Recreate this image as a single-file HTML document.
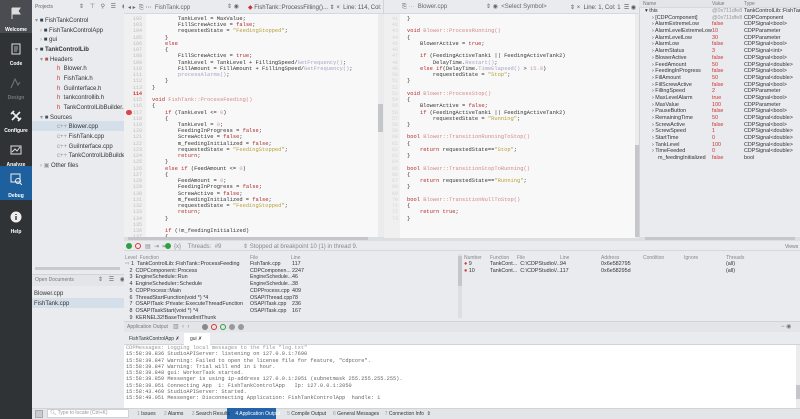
<!DOCTYPE html>
<html><head><meta charset="utf-8"><style>
*{margin:0;padding:0;box-sizing:border-box}
body{width:800px;height:419px;overflow:hidden;background:#e9ebee;font-family:"Liberation Sans",sans-serif;font-size:6px;color:#333;position:relative}
.a{position:absolute;white-space:nowrap}
.sb{left:0;top:0;width:32px;height:419px;background:#2f3336}
.sbi{position:absolute;left:0;width:32px;height:33px;text-align:center;color:#fff;font-weight:bold;font-size:5px}
.sbi .ic{position:absolute;left:10px;top:7px;width:12px;height:12px}
.sbi .lb{position:absolute;left:0;width:32px;top:25px}
.code{font-family:"Liberation Mono",monospace;font-size:5.4px;line-height:6.23px;white-space:pre;color:#333}
.k{color:#b02a2a}.s{color:#b5a13a}.f{color:#d58a8a}.n{color:#c9a0a0}.m{color:#a8a2c4}
.ln{font-family:"Liberation Mono",monospace;font-size:5px;line-height:6.23px;white-space:pre;color:#bdbdbd;text-align:right}
.red{color:#c33}
.gr{color:#999}
</style></head><body>

<div class="a sb">
 <div class="sbi" style="top:0;background:#494d51"><svg class="ic" viewBox="0 0 12 12"><path d="M2 1v11M2 1h8l-2 3 2 3H2" fill="#ddd" stroke="#ddd"/></svg><div class="lb" style="top:27px">Welcome</div></div>
 <div class="sbi" style="top:36px"><svg class="ic" viewBox="0 0 12 12"><rect x="2" y="1" width="8" height="10" fill="none" stroke="#ddd"/><path d="M4 4h4M4 6h4M4 8h3" stroke="#ddd" stroke-width=".8"/></svg><div class="lb">Code</div></div>
 <div class="sbi" style="top:70px;color:#777"><svg class="ic" viewBox="0 0 12 12"><path d="M1 11l4-9 3 6 2-3" fill="none" stroke="#777"/></svg><div class="lb">Design</div></div>
 <div class="sbi" style="top:103px"><svg class="ic" viewBox="0 0 12 12"><path d="M2 2l8 8M10 2l-8 8M1 4l3-3M8 11l3-3" stroke="#eee" stroke-width="1.6"/></svg><div class="lb">Configure</div></div>
 <div class="sbi" style="top:137px"><svg class="ic" viewBox="0 0 12 12"><rect x="1" y="2" width="10" height="8" fill="none" stroke="#ddd"/><path d="M2 8l3-3 2 2 3-4" fill="none" stroke="#ddd"/></svg><div class="lb">Analyze</div></div>
 <div class="sbi" style="top:166px;height:34px;background:#1e5f9e"><svg class="ic" viewBox="0 0 12 12"><rect x="1" y="1" width="9" height="8" fill="none" stroke="#eee"/><circle cx="8" cy="8" r="2.5" fill="none" stroke="#eee"/><path d="M10 10l2 2" stroke="#eee"/></svg><div class="lb" style="top:27px">Debug</div></div>
 <div class="sbi" style="top:204px"><svg class="ic" viewBox="0 0 12 12"><circle cx="6" cy="6" r="5.5" fill="#eee"/><path d="M6 5v4M6 3v1" stroke="#2f3336" stroke-width="1.4"/></svg><div class="lb">Help</div></div>
</div>

<div class="a" style="left:32px;top:0;width:92px;height:408px;background:#e9ebee"></div>
<div class="a" style="left:35px;top:4px;color:#666;font-size:5px">Projects</div>
<div class="a" style="left:79px;top:3px;color:#666;font-size:6px;letter-spacing:2px">⇕ ⊤ ⚲ ☰ ◉</div>
<div class="a" style="left:32px;top:121px;width:92px;height:10px;background:#d5dfea"></div>
<div class="a" style="left:35px;top:17px;line-height:9.65px">
<div><span class="gr">▾</span> <span style="color:#345">■</span> FishTankControl</div>
<div>&nbsp;&nbsp;&nbsp;<span class="gr">›</span> <span style="color:#345">■</span> FishTankControlApp</div>
<div>&nbsp;&nbsp;&nbsp;<span class="gr">›</span> <span style="color:#345">■</span> gui</div>
<div><span class="gr">▾</span> <span style="color:#345">■</span> <b>TankControlLib</b></div>
<div>&nbsp;&nbsp;&nbsp;<span class="gr">▾</span> <span style="color:#a55">■</span> Headers</div>
<div style="padding-left:22px"><span class="red">h</span>&nbsp; Blower.h</div>
<div style="padding-left:22px"><span class="red">h</span>&nbsp; FishTank.h</div>
<div style="padding-left:22px"><span class="red">h</span>&nbsp; GuiInterface.h</div>
<div style="padding-left:22px"><span class="red">h</span>&nbsp; tankcontrollib.h</div>
<div style="padding-left:22px"><span class="red">h</span>&nbsp; TankControlLibBuilder.h</div>
<div>&nbsp;&nbsp;&nbsp;<span class="gr">▾</span> <span style="color:#456">■</span> Sources</div>
<div style="padding-left:22px"><span class="gr">c++</span> Blower.cpp</div>
<div style="padding-left:22px"><span class="gr">c++</span> FishTank.cpp</div>
<div style="padding-left:22px"><span class="gr">c++</span> GuiInterface.cpp</div>
<div style="padding-left:22px"><span class="gr">c++</span> TankControlLibBuilder.cpp</div>
<div>&nbsp;&nbsp;&nbsp;<span class="gr">›</span> <span class="gr">▣</span> Other files</div>
</div>
<div class="a" style="left:35px;top:267px;width:85px;height:3px;background:#c6c9cd"></div>
<div class="a" style="left:32px;top:274px;width:92px;height:12px;background:#e3e5e9;border-top:1px solid #d0d3d7"></div>
<div class="a" style="left:35px;top:277px;color:#777;font-size:5px">Open Documents</div>
<div class="a" style="left:98px;top:276px;color:#666;letter-spacing:2px">⇕ ☰ ◉</div>
<div class="a" style="left:32px;top:298px;width:92px;height:10px;background:#d5dfea"></div>
<div class="a" style="left:34px;top:289px;line-height:10px">Blower.cpp<br>FishTank.cpp</div>

<div class="a" style="left:124px;top:0;width:259px;height:14px;background:#e9ebee;border-bottom:1px solid #d5d8dc"></div>
<div class="a" style="left:128px;top:4px;color:#666">◂ ▸ &nbsp;⎘ ⋯ &nbsp;FishTank.cpp</div>
<div class="a" style="left:227px;top:3px;color:#666">⇕ ◉</div>
<div class="a" style="left:248px;top:4px;color:#555"><span class="red">◆</span> FishTank::ProcessFilling()... ⇕ × &nbsp;Line: 114, Col: 1 &nbsp;☰ ◉</div>
<div class="a" style="left:124px;top:14px;width:259px;height:224px;background:#f8f8f8"></div>
<div class="a" style="left:124px;top:14px;width:22px;height:224px;background:#f0f0f0"></div>
<div class="a ln" style="left:124px;top:16px;width:18px">102
103
104
105
106
107
108
109
110
111
112
113
<span style="color:#c33;font-weight:bold">114</span>
115
116
117
118
119
120
121
122
123
124
125
126
127
128
129
130
131
132
133
134
135
136
137</div>
<div class="a" style="left:126px;top:110px;width:6px;height:5px;border-radius:3px;background:#d44"></div>
<div class="a code" style="left:152px;top:16px">        TankLevel = MaxValue;
        FillScrewActive = <span class="k">false</span>;
        requestedState = <span class="s">"FeedingStopped"</span>;
    }
    <span class="k">else</span>
    {
        FillScrewActive = <span class="k">true</span>;
        TankLevel = TankLevel + FillingSpeed/<span class="m">GetFrequency()</span>;
        FillAmount = FillAmount + FillingSpeed/<span class="m">GetFrequency()</span>;
        <span class="m">processAlarms()</span>;
    }
}

<span class="k">void</span> <span class="f">FishTank::ProcessFeeding()</span>
{
    <span class="k">if</span> (TankLevel &lt;= <span class="n">0</span>)
    {
        TankLevel = <span class="n">0</span>;
        FeedingInProgress = <span class="k">false</span>;
        ScrewActive = <span class="k">false</span>;
        m_feedingInitialized = <span class="k">false</span>;
        requestedState = <span class="s">"FeedingStopped"</span>;
        <span class="k">return</span>;
    }
    <span class="k">else if</span> (FeedAmount &lt;= <span class="n">0</span>)
    {
        FeedAmount = <span class="n">0</span>;
        FeedingInProgress = <span class="k">false</span>;
        ScrewActive = <span class="k">false</span>;
        m_feedingInitialized = <span class="k">false</span>;
        requestedState = <span class="s">"FeedingStopped"</span>;
        <span class="k">return</span>;
    }

    <span class="k">if</span> (!m_feedingInitialized)
    {</div>
<div class="a" style="left:378px;top:14px;width:5px;height:224px;background:#ececec"></div>
<div class="a" style="left:378px;top:104px;width:5px;height:28px;background:#c4c6c9"></div>
<div class="a" style="left:124px;top:237px;width:676px;height:4px;background:#dcdfe2"></div>
<div class="a" style="left:128px;top:237px;width:240px;height:3px;background:#c4c6c9"></div>
<div class="a" style="left:645px;top:237px;width:150px;height:3px;background:#c4c6c9"></div>

<div class="a" style="left:383px;top:0;width:255px;height:14px;background:#e9ebee;border-bottom:1px solid #d5d8dc;border-left:1px solid #d0d3d7"></div>
<div class="a" style="left:402px;top:4px;color:#666">⎘ ⋯ &nbsp;Blower.cpp</div>
<div class="a" style="left:486px;top:3px;color:#666">⇕ ◉ &nbsp;&lt;Select Symbol&gt;</div>
<div class="a" style="left:570px;top:4px;color:#555">⇕ × &nbsp;Line: 1, Col: 1 &nbsp;☰ ◉</div>
<div class="a" style="left:384px;top:14px;width:254px;height:224px;background:#f8f8f8"></div>
<div class="a" style="left:384px;top:14px;width:16px;height:224px;background:#f0f0f0"></div>
<div class="a ln" style="left:384px;top:16px;width:14px;color:#d5d5d5">41
42
43
44
45
46
47
48
49
50
51
52
53
54
55
56
57
58
59
60
61
62
63
64
65
66
67
68
69
70
71
72
73</div>
<div class="a code" style="left:407px;top:16px">}

<span class="k">void</span> <span class="f">Blower::ProcessRunning()</span>
{
    BlowerActive = <span class="k">true</span>;

    <span class="k">if</span> (FeedingActiveTank1 || FeedingActiveTank2)
        DelayTime.<span class="m">Restart()</span>;
    <span class="k">else if</span>(DelayTime.<span class="m">TimeElapsed()</span> &gt; <span class="n">15.0</span>)
        requestedState = <span class="s">"Stop"</span>;
}

<span class="k">void</span> <span class="f">Blower::ProcessStop()</span>
{
    BlowerActive = <span class="k">false</span>;
    <span class="k">if</span> (FeedingActiveTank1 || FeedingActiveTank2)
        requestedState = <span class="s">"Running"</span>;
}

<span class="k">bool</span> <span class="f">Blower::TransitionRunningToStop()</span>
{
    <span class="k">return</span> requestedState==<span class="s">"Stop"</span>;
}

<span class="k">bool</span> <span class="f">Blower::TransitionStopToRunning()</span>
{
    <span class="k">return</span> requestedState==<span class="s">"Running"</span>;
}

<span class="k">bool</span> <span class="f">Blower::TransitionNullToStop()</span>
{
    <span class="k">return true</span>;
}</div>
<div class="a" style="left:635px;top:14px;width:4px;height:224px;background:#ececec"></div>
<div class="a" style="left:635px;top:145px;width:4px;height:92px;background:#c4c6c9"></div>

<div class="a" style="left:639px;top:0;width:161px;height:237px;background:#e9ebee;border-left:1px solid #d0d3d7"></div>
<div class="a" style="left:639px;top:0;width:161px;height:8px;background:#e3e5e9;border-bottom:1px solid #d5d8dc"></div>
<div class="a" style="left:643px;top:1px;color:#777;font-size:5px">Name</div>
<div class="a" style="left:712px;top:1px;color:#777;font-size:5px">Value</div>
<div class="a" style="left:744px;top:1px;color:#777;font-size:5px">Type</div>
<div class="a" style="left:645px;top:8px;font-size:5.4px;line-height:6.68px">
<div>▾ this</div><div style="padding-left:7px">› [CDPComponent]</div><div style="padding-left:7px">› AlarmExtremeLow</div><div style="padding-left:7px">› AlarmLevelExtremeLow</div><div style="padding-left:7px">› AlarmLevelLow</div><div style="padding-left:7px">› AlarmLow</div><div style="padding-left:7px">› AlarmStatus</div><div style="padding-left:7px">› BlowerActive</div><div style="padding-left:7px">› FeedAmount</div><div style="padding-left:7px">› FeedingInProgress</div><div style="padding-left:7px">› FillAmount</div><div style="padding-left:7px">› FillScrewActive</div><div style="padding-left:7px">› FillingSpeed</div><div style="padding-left:7px">› MaxLevelAlarm</div><div style="padding-left:7px">› MaxValue</div><div style="padding-left:7px">› PauseButton</div><div style="padding-left:7px">› RemainingTime</div><div style="padding-left:7px">› ScrewActive</div><div style="padding-left:7px">› ScrewSpeed</div><div style="padding-left:7px">› StartTime</div><div style="padding-left:7px">› TankLevel</div><div style="padding-left:7px">› TimeFeeded</div><div style="padding-left:13px">m_feedingInitialized</div>
</div>
<div class="a" style="left:712px;top:8px;font-size:5.4px;line-height:6.68px;color:#c33">
<div class="gr">@0x711dfe8</div><div class="gr">@0x711dfe8</div><div>false</div><div>10</div><div>30</div><div>false</div><div>3</div><div>false</div><div>50</div><div>false</div><div>50</div><div>false</div><div>2</div><div>true</div><div>100</div><div>false</div><div>50</div><div>false</div><div>1</div><div>0</div><div>100</div><div>0</div><div>false</div>
</div>
<div class="a" style="left:744px;top:8px;font-size:5.4px;line-height:6.68px">
<div>TankControlLib::FishTank</div><div>CDPComponent</div><div>CDPSignal&lt;bool&gt;</div><div>CDPParameter</div><div>CDPParameter</div><div>CDPSignal&lt;bool&gt;</div><div>CDPSignal&lt;int&gt;</div><div>CDPSignal&lt;bool&gt;</div><div>CDPSignal&lt;double&gt;</div><div>CDPSignal&lt;bool&gt;</div><div>CDPSignal&lt;double&gt;</div><div>CDPSignal&lt;bool&gt;</div><div>CDPParameter</div><div>CDPSignal&lt;bool&gt;</div><div>CDPParameter</div><div>CDPSignal&lt;bool&gt;</div><div>CDPSignal&lt;double&gt;</div><div>CDPSignal&lt;bool&gt;</div><div>CDPSignal&lt;double&gt;</div><div>CDPSignal&lt;double&gt;</div><div>CDPSignal&lt;double&gt;</div><div>CDPSignal&lt;double&gt;</div><div>bool</div>
</div>

<div class="a" style="left:124px;top:241px;width:676px;height:10px;background:#e9ebee;border-bottom:1px solid #d5d8dc"></div>
<div class="a" style="left:126px;top:243px;width:6px;height:6px;border-radius:3px;background:#2ea043"></div>
<div class="a" style="left:135px;top:243px;width:6px;height:6px;border-radius:3px;border:1.5px solid #d33"></div>
<div class="a" style="left:145px;top:243px;color:#888">▤ &nbsp;⇥ &nbsp;⇤</div>
<div class="a" style="left:165px;top:243px;width:6px;height:6px;border-radius:3px;background:#2ea043"></div>
<div class="a" style="left:174px;top:243px;color:#888">{x} &nbsp;&nbsp;&nbsp;Threads: &nbsp;#9 &nbsp;&nbsp;&nbsp;&nbsp;&nbsp;&nbsp;&nbsp;&nbsp;&nbsp;&nbsp;&nbsp;&nbsp;⇕ Stopped at breakpoint 10 (1) in thread 9.</div>
<div class="a" style="left:785px;top:244px;color:#777;font-size:5px">Views</div>

<div class="a" style="left:124px;top:252px;width:336px;height:70px;background:#e9ebee"></div>
<div class="a" style="left:125px;top:255px;color:#888;font-size:5px">Level &nbsp;Function</div>
<div class="a" style="left:250px;top:255px;color:#888;font-size:5px">File</div>
<div class="a" style="left:291px;top:255px;color:#888;font-size:5px">Line</div>
<div class="a" style="left:125px;top:261px;font-size:5.4px;line-height:6.7px">
<div><span class="gr">⇨</span> 1 &nbsp;TankControlLib::FishTank::ProcessFeeding</div>
<div>&nbsp;&nbsp;&nbsp;2 &nbsp;CDPComponent::Process</div>
<div>&nbsp;&nbsp;&nbsp;3 &nbsp;EngineSchedule::Run</div>
<div>&nbsp;&nbsp;&nbsp;4 &nbsp;EngineScheduler::Schedule</div>
<div>&nbsp;&nbsp;&nbsp;5 &nbsp;CDPProcess::Main</div>
<div>&nbsp;&nbsp;&nbsp;6 &nbsp;ThreadStartFunction(void *) *4</div>
<div>&nbsp;&nbsp;&nbsp;7 &nbsp;OSAPITask::Private::ExecuteThreadFunction</div>
<div>&nbsp;&nbsp;&nbsp;8 &nbsp;OSAPITaskStart(void *) *4</div>
<div>&nbsp;&nbsp;&nbsp;9 &nbsp;KERNEL32!BaseThreadInitThunk</div>
</div>
<div class="a" style="left:250px;top:261px;font-size:5.2px;line-height:6.7px">
<div>FishTank.cpp</div><div>CDPComponen...</div><div>EngineSchedule...</div><div>EngineSchedule...</div><div>CDPProcess.cpp</div><div>OSAPIThread.cpp</div><div>OSAPITask.cpp</div><div>OSAPITask.cpp</div>
</div>
<div class="a" style="left:292px;top:261px;font-size:5.4px;line-height:6.7px;background:#e9ebee">
<div>117</div><div>2247</div><div>46</div><div>38</div><div>409</div><div>78</div><div>236</div><div>167</div>
</div>

<div class="a" style="left:458px;top:252px;width:342px;height:70px;background:#e9ebee"></div>
<div class="a" style="left:458px;top:254px;width:4px;height:64px;background:#dcdfe2"></div>
<div class="a" style="left:458px;top:256px;width:4px;height:30px;background:#c4c6c9"></div>
<div class="a" style="left:464px;top:255px;color:#888;font-size:5px">Number</div>
<div class="a" style="left:490px;top:255px;color:#888;font-size:5px">Function</div>
<div class="a" style="left:517px;top:255px;color:#888;font-size:5px">File</div>
<div class="a" style="left:560px;top:255px;color:#888;font-size:5px">Line</div>
<div class="a" style="left:601px;top:255px;color:#888;font-size:5px">Address</div>
<div class="a" style="left:643px;top:255px;color:#888;font-size:5px">Condition</div>
<div class="a" style="left:684px;top:255px;color:#888;font-size:5px">Ignore</div>
<div class="a" style="left:726px;top:255px;color:#888;font-size:5px">Threads</div>
<div class="a" style="left:464px;top:261px;font-size:5.4px;line-height:6.7px"><span class="red">●</span> 9<br><span class="red">●</span> 10</div>
<div class="a" style="left:490px;top:261px;font-size:5.4px;line-height:6.7px">TankCont... &nbsp;C:\CDPStudio\/...<br>TankCont... &nbsp;C:\CDPStudio\/...</div>
<div class="a" style="left:560px;top:261px;font-size:5.4px;line-height:6.7px">94<br>117</div>
<div class="a" style="left:601px;top:261px;font-size:5.4px;line-height:6.7px">0x6e582795<br>0x6e58295d</div>
<div class="a" style="left:726px;top:261px;font-size:5.4px;line-height:6.7px">(all)<br>(all)</div>

<div class="a" style="left:124px;top:321px;width:676px;height:11px;background:#e3e5e9;border-top:1px solid #d0d3d7"></div>
<div class="a" style="left:127px;top:324px;color:#777;font-size:5px">Application Output</div>
<div class="a" style="left:173px;top:323px;color:#888">▥ &nbsp;‹ &nbsp;›</div>
<div class="a" style="left:202px;top:324px;width:6px;height:6px;border-radius:3px;background:#888"></div>
<div class="a" style="left:211px;top:324px;width:6px;height:6px;border-radius:3px;border:1.5px solid #d33"></div>
<div class="a" style="left:220px;top:324px;width:6px;height:6px;border-radius:3px;border:1.5px solid #2ea043"></div>
<div class="a" style="left:229px;top:324px;width:6px;height:6px;border-radius:3px;background:#999"></div>
<div class="a" style="left:238px;top:324px;width:6px;height:6px;border-radius:3px;background:#999"></div>
<div class="a" style="left:781px;top:323px;color:#777">− ◉</div>
<div class="a" style="left:124px;top:332px;width:676px;height:13px;background:#e9ebee;border-bottom:1px solid #d0d3d7"></div>
<div class="a" style="left:129px;top:336px;font-size:5px">FishTankControlApp ✗</div>
<div class="a" style="left:184px;top:333px;width:26px;height:12px;background:#fff"></div>
<div class="a" style="left:190px;top:336px;font-size:5px">gui ✗</div>
<div class="a" style="left:124px;top:345px;width:672px;height:63px;background:#fff"></div>
<div class="a" style="left:796px;top:345px;width:4px;height:63px;background:#ececec"></div>
<div class="a" style="left:796px;top:385px;width:4px;height:14px;background:#c4c6c9"></div>
<div class="a code" style="left:126px;top:345px;color:#666;font-size:5.3px;line-height:6.3px"><span style="color:#999">CDPMessages: Logging local messages to the file "log.txt"</span>
15:58:39.836 StudioAPIServer: listening on 127.0.0.1:7690
15:58:39.847 Warning: Failed to open the license file for feature, "cdpcore".
15:58:39.847 Warning: Trial will end in 1 hour.
15:58:39.848 gui: WorkerTask started.
15:58:39.850 Messenger is using ip-address 127.0.0.1:2051 (subnetmask 255.255.255.255).
15:58:39.951 Connecting App  1: FishTankControlApp   Ip: 127.0.0.1:2050
15:58:43.460 StudioAPIServer: Started.
15:58:49.051 Messenger: Disconnecting Application: FishTankControlApp  handle: 1</div>

<div class="a" style="left:32px;top:408px;width:768px;height:11px;background:#e3e5e9;border-top:1px solid #d0d3d7"></div>
<div class="a" style="left:35px;top:410px;width:8px;height:8px;background:#c8cbcf;border:1px solid #aaa"></div>
<div class="a" style="left:47px;top:409px;width:82px;height:9px;background:#fff;border:1px solid #cfd2d6"></div>
<div class="a" style="left:50px;top:410px;color:#999;font-size:5px">🔍︎ Type to locate (Ctrl+K)</div>
<div class="a" style="left:227px;top:408px;width:49px;height:11px;background:#2564a8"></div>
<div class="a" style="left:137px;top:411px;font-size:5px">
<span class="gr">1</span> Issues &nbsp;&nbsp;&nbsp;&nbsp;&nbsp;<span class="gr">2</span> Alarms &nbsp;&nbsp;&nbsp;&nbsp;&nbsp;<span class="gr">3</span> Search Results &nbsp;&nbsp;&nbsp;<span style="color:#fff">4 Application Output</span> &nbsp;&nbsp;&nbsp;&nbsp;<span class="gr">5</span> Compile Output &nbsp;&nbsp;&nbsp;&nbsp;<span class="gr">6</span> General Messages &nbsp;&nbsp;&nbsp;<span class="gr">7</span> Connection Info &nbsp;⇕</div>
</body></html>
